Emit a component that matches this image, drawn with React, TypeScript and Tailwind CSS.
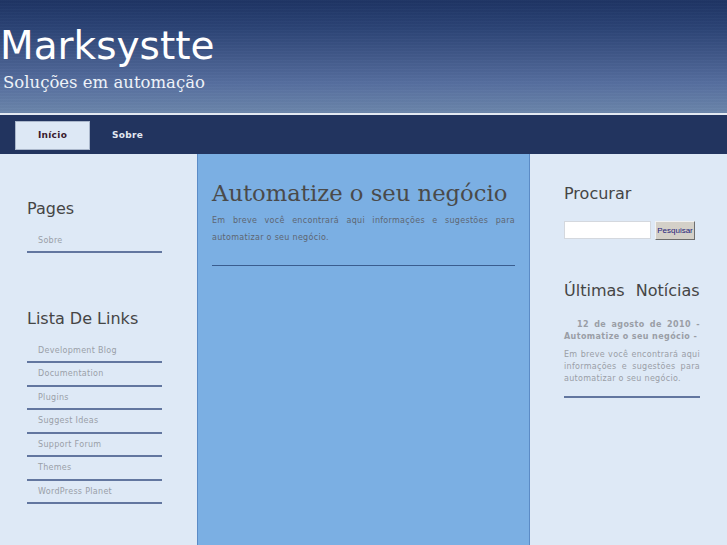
import React from "react";

const sans = "font-['DejaVu_Sans',sans-serif]";
const serif = "font-['DejaVu_Serif',serif]";

const links = [
  "Development Blog",
  "Documentation",
  "Plugins",
  "Suggest Ideas",
  "Support Forum",
  "Themes",
  "WordPress Planet",
];

function LinkItem({ label }: { label: string }) {
  return (
    <li className="h-[23.5px] border-b-2 border-[#62769f] pl-[11px] pt-[5px]">
      <span className="block text-[8px] leading-[11px] tracking-[0.3px] text-[#9a9fa8]">{label}</span>
    </li>
  );
}

export default function App() {
  return (
    <div className={`w-[727px] h-[545px] overflow-hidden bg-[#dee9f6] ${sans}`}>
      {/* Header */}
      <div className="relative h-[113px] bg-[linear-gradient(to_bottom,#1e3464_0%,#2c4476_25%,#42598a_50%,#5770a0_75%,#6c86ab_100%)]">
        <div className="absolute inset-0 bg-[repeating-linear-gradient(to_bottom,rgba(255,255,255,0.015)_0px,rgba(255,255,255,0.015)_1px,rgba(0,0,0,0.015)_1px,rgba(0,0,0,0.015)_3px)]" />
        <div className="relative pt-[23px]">
          <div className="text-[39px] leading-[45px] text-white">Marksystte</div>
          <div className={`${serif} mt-[5px] pl-[3px] text-[16.5px] leading-[20px] text-[#eef2f8]`}>
            Soluções em automação
          </div>
        </div>
      </div>
      <div className="h-[2px] bg-[#e3e9f1]" />
      {/* Nav */}
      <div className="flex h-[39px] items-start bg-[#22345f] pl-[15px] pt-[6px]">
        <div className="flex h-[29px] w-[75px] items-center justify-center border border-[#aab7cb] bg-[#dde8f5] text-[9px] font-bold tracking-[0.3px] text-[#3a1b2e]">
          Início
        </div>
        <div className="ml-[22px] flex h-[29px] items-center text-[9px] font-bold tracking-[0.3px] text-[#e2e8f1]">
          Sobre
        </div>
      </div>
      {/* Main */}
      <div className="flex h-[391px]">
        {/* Left */}
        <div className="w-[197px] shrink-0 bg-[#dee9f6] pl-[27px] pt-[45px]">
          <div className="w-[135px]">
            <h2 className="text-[16px] leading-[20px] text-[#454545]">Pages</h2>
            <ul className="mt-[10.5px]">
              <LinkItem label="Sobre" />
            </ul>
            <h2 className="mt-[56px] text-[16px] leading-[20px] text-[#454545]">Lista De Links</h2>
            <ul className="mt-[10.5px]">
              {links.map((l) => (
                <LinkItem key={l} label={l} />
              ))}
            </ul>
          </div>
        </div>
        {/* Center */}
        <div className="w-[333px] shrink-0 border-x border-[#5b8bc6] bg-[#7bafe3] px-[14px] pt-[25px]">
          <div className="border-b border-[#3a5d8f] pb-[19.5px]">
            <h1 className={`${serif} text-[22.7px] leading-[28px] text-[#4a4a4a]`}>Automatize o seu negócio</h1>
            <p className="mt-[4.5px] text-justify text-[8px] leading-[17px] tracking-[0.3px] text-[#5e6672]">
              Em breve você encontrará aqui informações e sugestões para automatizar o seu negócio.
            </p>
          </div>
        </div>
        {/* Right */}
        <div className="flex-1 bg-[#dee9f6] pl-[34px] pt-[30px]">
          <div className="w-[136px]">
            <h2 className="text-[16px] leading-[20px] text-[#454545]">Procurar</h2>
            <div className="mt-[17px] flex items-start">
              <div className="h-[18px] w-[87px] border border-[#d4d8de] bg-white" />
              <div className="ml-[4px] flex h-[19px] w-[40px] items-center justify-center border border-t-[#f2f2f2] border-l-[#f2f2f2] border-r-[#6e6e6e] border-b-[#6e6e6e] bg-[#d4d0c8] font-['Liberation_Sans',sans-serif] text-[8px] text-[#1f2078]">
                Pesquisar
              </div>
            </div>
            <h2 className="mt-[41px] text-[16px] leading-[20px] text-[#454545] [word-spacing:6px]">Últimas Notícias</h2>
            <p className="mt-[18px] indent-[13px] text-justify text-[8px] font-bold leading-[11.5px] tracking-[0.4px] text-[#9a9ea6]">
              12 de agosto de 2010 - Automatize o seu negócio -
            </p>
            <div className="border-b-2 border-[#62769f] pb-[11px]">
              <p className="mt-[7px] text-justify text-[8px] leading-[12px] tracking-[0.3px] text-[#9a9ea6]">
                Em breve você encontrará aqui informações e sugestões para automatizar o seu negócio.
              </p>
            </div>
          </div>
        </div>
      </div>
    </div>
  );
}
